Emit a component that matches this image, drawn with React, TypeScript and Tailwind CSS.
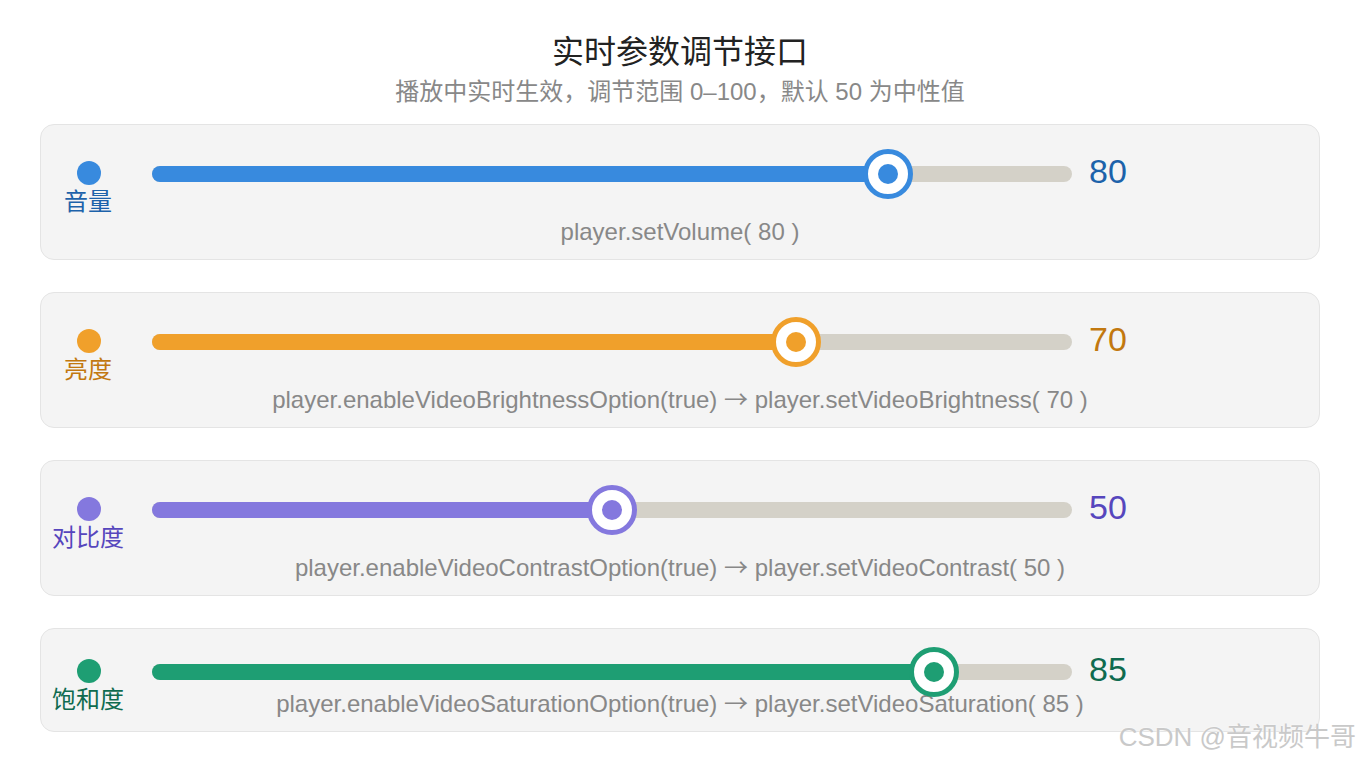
import React from 'react';

interface Param {
  label: string;
  value: number;
  enable?: string;
  call: string;
  bg: string;
  border: string;
  text: string;
  pt: string;
  codeMt: string;
}

const params: Param[] = [
  {
    label: '音量',
    value: 80,
    call: 'player.setVolume( 80 )',
    bg: 'bg-[#388ade]',
    border: 'border-[#388ade]',
    text: 'text-[#1c62aa]',
    pt: 'pt-[36px]',
    codeMt: 'mt-[4px]',
  },
  {
    label: '亮度',
    value: 70,
    enable: 'player.enableVideoBrightnessOption(true)',
    call: 'player.setVideoBrightness( 70 )',
    bg: 'bg-[#f0a02b]',
    border: 'border-[#f0a02b]',
    text: 'text-[#c2780f]',
    pt: 'pt-[36px]',
    codeMt: 'mt-[4px]',
  },
  {
    label: '对比度',
    value: 50,
    enable: 'player.enableVideoContrastOption(true)',
    call: 'player.setVideoContrast( 50 )',
    bg: 'bg-[#8478de]',
    border: 'border-[#8478de]',
    text: 'text-[#5646bd]',
    pt: 'pt-[36px]',
    codeMt: 'mt-[4px]',
  },
  {
    label: '饱和度',
    value: 85,
    enable: 'player.enableVideoSaturationOption(true)',
    call: 'player.setVideoSaturation( 85 )',
    bg: 'bg-[#1e9e73]',
    border: 'border-[#1e9e73]',
    text: 'text-[#0f6b4f]',
    pt: 'pt-[30px]',
    codeMt: 'mt-[-22px]',
  },
];

function ParamCard({ p }: { p: Param }) {
  return (
    <div className={`rounded-[14px] border border-[#e4e4e4] bg-[#f4f4f4] ${p.pt} pb-[13px]`}>
      <div className="flex items-start">
        {/* dot + label */}
        <div className="flex w-[96px] flex-col items-center">
          <div className={`h-[24px] w-[24px] rounded-full ${p.bg}`} />
          <div className={`mt-[5px] pr-[2px] text-[24px] leading-[24px] ${p.text}`}>{p.label}</div>
        </div>

        {/* slider */}
        <div className="relative ml-[15px] mt-px flex h-[24px] w-[920px] items-center">
          <div className="h-[16px] w-full rounded-full bg-[#d4d1c8]" />
          <div
            className={`absolute left-0 top-[4px] h-[16px] rounded-l-full ${p.bg}`}
            style={{ width: `${p.value}%` }}
          />
          <div
            className={`absolute top-1/2 flex h-[50px] w-[50px] -translate-x-1/2 -translate-y-1/2 items-center justify-center rounded-full border-[5px] bg-white ${p.border}`}
            style={{ left: `${p.value}%` }}
          >
            <div className={`h-[20px] w-[20px] rounded-full ${p.bg}`} />
          </div>
        </div>

        <div className={`ml-[17px] -mt-[2px] flex h-[24px] items-center text-[34px] leading-[24px] ${p.text}`}>
          {p.value}
        </div>
      </div>

      <div className={`${p.codeMt} h-[28px] overflow-visible text-center text-[24px] leading-[28px] text-[#888888]`}>
        {p.enable && (
          <>
            {p.enable}{' '}
            <span className="font-['Noto_Sans_CJK_SC',sans-serif] leading-none">→</span>{' '}
          </>
        )}
        {p.call}
      </div>
    </div>
  );
}

export default function App() {
  return (
    <main className="relative min-h-[760px] bg-white px-10 pt-[32px] font-['Liberation_Sans','Noto_Sans_CJK_SC',sans-serif]">
      <h1 className="text-center text-[32px] leading-[40px] text-[#222222]">实时参数调节接口</h1>
      <p className="mt-[4px] text-center text-[24px] leading-[32px] text-[#888888]">
        播放中实时生效，调节范围 0–100，默认 50 为中性值
      </p>

      <div className="mt-[16px] flex flex-col gap-[32px]">
        {params.map((p) => (
          <ParamCard key={p.label} p={p} />
        ))}
      </div>

      {/* watermark */}
      <div className="absolute right-[4px] top-[722px] text-[26px] leading-[30px] text-[#c9c9c9] [text-shadow:0_0_2px_#ffffff]">
        CSDN @音视频牛哥
      </div>
    </main>
  );
}
